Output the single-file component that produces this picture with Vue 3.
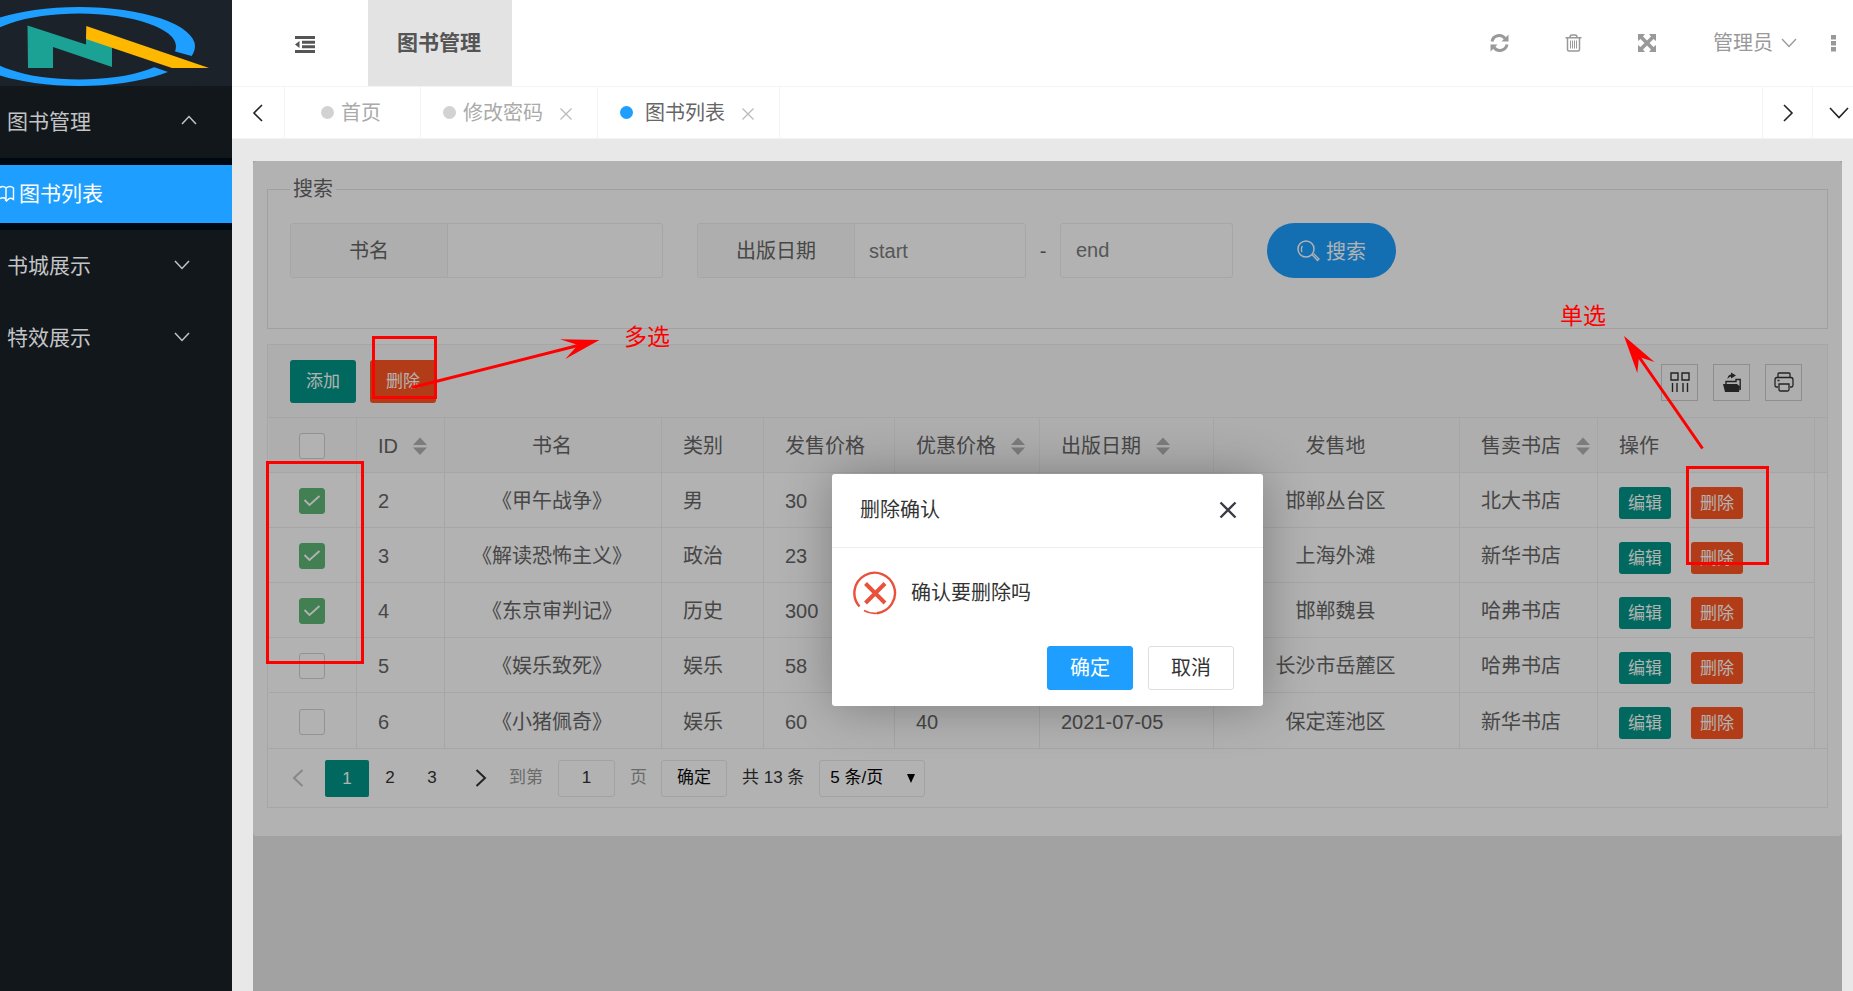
<script setup>
import { ref } from 'vue'

const books = ref([
  { id: 2, name: '《甲午战争》', type: '男', price: '30', sale: '', date: '', place: '邯郸丛台区', shop: '北大书店', checked: true },
  { id: 3, name: '《解读恐怖主义》', type: '政治', price: '23', sale: '', date: '', place: '上海外滩', shop: '新华书店', checked: true },
  { id: 4, name: '《东京审判记》', type: '历史', price: '300', sale: '', date: '', place: '邯郸魏县', shop: '哈弗书店', checked: true },
  { id: 5, name: '《娱乐致死》', type: '娱乐', price: '58', sale: '', date: '', place: '长沙市岳麓区', shop: '哈弗书店', checked: false },
  { id: 6, name: '《小猪佩奇》', type: '娱乐', price: '60', sale: '40', date: '2021-07-05', place: '保定莲池区', shop: '新华书店', checked: false },
])

const columns = [
  { label: 'ID', sort: true },
  { label: '书名', center: true },
  { label: '类别' },
  { label: '发售价格' },
  { label: '优惠价格', sort: true },
  { label: '出版日期', sort: true },
  { label: '发售地', center: true },
  { label: '售卖书店', sort: true },
  { label: '操作' },
]

const allChecked = ref(false)
const bookName = ref('')
const startDate = ref('')
const endDate = ref('')
const jumpTo = ref('1')
</script>

<template>
  <div class="app">
    <aside class="sidebar">
      <div class="logo">
        <svg width="232" height="86" viewBox="0 0 232 86" aria-hidden="true">
          <path fill="#1e9fff" fill-rule="evenodd" d="M79 7a116 39.500 0 1 1 0 79a116 39.500 0 1 1 0-79zM79 13.500a97 33 0 1 0 0 66a97 33 0 1 0 0-66z" />
          <path fill="#1c222a" d="M168 49.500L192.500 56.300L222 64L200 84L167.300 71.800L148 65z" />
          <path fill="#1ba294" d="M27.500 25.500L86 44.500V38L112 47V67L53 47V68H28z" />
          <path fill="#ffb800" d="M86.300 26L209 68H172L86 39z" />
        </svg>
      </div>
      <nav>
        <a href="#" class="menu">
          <span>图书管理</span>
          <svg class="up" width="16" height="10" viewBox="0 0 16 10"><path d="M1 9L8 1.500L15 9" /></svg>
        </a>
        <div class="submenu">
          <a href="#" class="sub">
            <svg width="15" height="18" viewBox="0 0 15 18"><path d="M-1 3Q3 0 6 3V14Q3 11.500-1 14M6 3Q10 0 13.500 3V14.500Q10 12 8 14.500L6.500 16L5 14.500" /></svg>
            <span>图书列表</span>
          </a>
        </div>
        <a v-for="m in ['书城展示', '特效展示']" :key="m" href="#" class="menu">
          <span>{{ m }}</span>
          <svg width="16" height="10" viewBox="0 0 16 10"><path d="M1 1L8 8.500L15 1" /></svg>
        </a>
      </nav>
    </aside>

    <div class="main">
      <header class="header">
        <button class="shrink" aria-label="收起菜单">
          <svg width="20" height="17" viewBox="0 0 20 17"><path fill="#555" d="M0 0h20v3H0zM7 4.700h13v3H7zM7 9.300h13v3H7zM0 14h20v3H0zM0 8.500L4.500 5v7z" /></svg>
        </button>
        <a href="#" class="nav-item">图书管理</a>
        <div class="header-right">
          <button class="tool" aria-label="刷新">
            <svg width="19" height="18" viewBox="0 0 19 18"><path fill="none" stroke="#999" stroke-width="3" d="M2 7.500A7.300 7.300 0 0 1 15 4.500M17 10.500A7.300 7.300 0 0 1 4 13.500" /><path fill="#999" d="M18.500 0.500V7.500H11.500zM0.500 17.500V10.500H7.500z" /></svg>
          </button>
          <button class="tool" aria-label="清除">
            <svg width="17" height="18" viewBox="0 0 17 18" fill="none" stroke="#999"><path stroke-width="1.500" d="M0.500 3.800h16M2.500 4V15.500Q2.500 17 4 17H13Q14.500 17 14.500 15.500V4M5 3.500Q5 1 7 1H10Q12 1 12 3.500" /><path d="M5.500 6.500v8M7.500 6.500v8M9.500 6.500v8M11.500 6.500v8" /></svg>
          </button>
          <button class="tool" aria-label="全屏">
            <svg width="18" height="18" viewBox="0 0 18 18"><path fill="#999" d="M0 0h7L5 2.500L9 6.500L13 2.500L11 0h7v7L15.500 5L11.500 9L15.500 13L18 11v7h-7L13 15.500L9 11.500L5 15.500L7 18H0V11L2.500 13L6.500 9L2.500 5L0 7z" /></svg>
          </button>
          <a href="#" class="user">
            <span>管理员</span>
            <svg width="16" height="10" viewBox="0 0 16 10"><path d="M1 1L8 8.500L15 1" /></svg>
          </a>
          <button class="more" aria-label="更多">
            <svg width="5" height="17" viewBox="0 0 5 17"><path fill="#999" d="M0 0h5v4.500H0zM0 6h5v4.500H0zM0 12h5v4.500H0z" /></svg>
          </button>
        </div>
      </header>

      <div class="tabs">
        <button class="tab-btn first" aria-label="向左">
          <svg width="12" height="18" viewBox="0 0 12 18"><path d="M10 1L2 9L10 17" /></svg>
        </button>
        <a href="#" class="tab home"><i class="dot"></i><span>首页</span></a>
        <a href="#" class="tab"><i class="dot"></i><span>修改密码</span>
          <svg width="12" height="12" viewBox="0 0 12 12"><path d="M0.500 0.500L11.500 11.500M11.500 0.500L0.500 11.500" /></svg>
        </a>
        <a href="#" class="tab active"><i class="dot"></i><span>图书列表</span>
          <svg width="12" height="12" viewBox="0 0 12 12"><path d="M0.500 0.500L11.500 11.500M11.500 0.500L0.500 11.500" /></svg>
        </a>
        <span class="spacer"></span>
        <button class="tab-btn" aria-label="向右">
          <svg width="12" height="18" viewBox="0 0 12 18"><path d="M2 1L10 9L2 17" /></svg>
        </button>
        <button class="tab-btn last" aria-label="标签操作">
          <svg width="20" height="12" viewBox="0 0 20 12"><path d="M1 1L10 10.500L19 1" /></svg>
        </button>
      </div>

      <div class="body">
        <div class="frame">
          <section class="card">
            <fieldset>
              <legend>搜索</legend>
              <form class="search" @submit.prevent>
                <div class="group name-group">
                  <label for="book-name">书名</label>
                  <input id="book-name" v-model="bookName" type="text" />
                </div>
                <div class="group date-group">
                  <label for="date-start">出版日期</label>
                  <input id="date-start" v-model="startDate" type="text" placeholder="start" />
                </div>
                <span class="dash">-</span>
                <input v-model="endDate" class="end" type="text" placeholder="end" aria-label="结束日期" />
                <button class="search-btn" type="submit">
                  <svg width="23" height="22" viewBox="0 0 23 22" fill="none" stroke="#fff"><circle cx="9" cy="9" r="8" stroke-width="1.500" /><path d="M5 12Q3.500 8.500 5.500 6M15 14.500L20.500 20.500L22 19L16.500 13.500" stroke-width="1.300" /></svg>
                  <span>搜索</span>
                </button>
              </form>
            </fieldset>

            <div class="panel">
              <div class="toolbar">
                <button class="btn green">添加</button>
                <button class="btn red">删除</button>
                <div class="tools">
                  <button aria-label="筛选列">
                    <svg width="20" height="20" viewBox="0 0 20 20" fill="none" stroke="#333" stroke-width="1.400"><path d="M1 1h7v7H1zM12 1h7v7H12zM2.500 11v9M7 11v9M13 11v9M17.500 11v9" /></svg>
                  </button>
                  <button aria-label="导出">
                    <svg width="20" height="20" viewBox="0 0 20 20"><path fill="#333" d="M1 12H15L18 14.500L17 20H3zM9 0.500L14 3.500L9 6.500V4.500Q6.500 5 5.500 7Q5.500 3 9 2.500z" /><path fill="none" stroke="#333" stroke-width="1.400" d="M4 12V9.500H14V7.500H18.200V18" /></svg>
                  </button>
                  <button aria-label="打印">
                    <svg width="20" height="20" viewBox="0 0 20 20" fill="none" stroke="#333" stroke-width="1.300"><path d="M4 5.500V2Q4 1 5 1H15Q16 1 16 2V5.500M4 15H2.500Q1 15 1 13V8Q1 5.500 3 5.500H17Q19 5.500 19 8V13Q19 15 17.500 15H16M5 12H15V17.500Q15 19 13.500 19H6.500Q5 19 5 17.500zM3.500 8.500h2" /></svg>
                  </button>
                </div>
              </div>

              <div class="table-wrap">
                <table>
                  <colgroup>
                    <col class="w88" /><col class="w88" /><col class="w217" /><col class="w102" /><col class="w131" />
                    <col class="w145" /><col class="w174" /><col class="w246" /><col class="w138" /><col /><col class="w12" />
                  </colgroup>
                  <thead>
                    <tr>
                      <th class="pick">
                        <label class="check">
                          <input v-model="allChecked" type="checkbox" aria-label="全选" />
                          <svg width="26" height="26" viewBox="0 0 26 26"><path d="M5.500 12L10.500 17L20.500 8" /></svg>
                        </label>
                      </th>
                      <th v-for="c in columns" :key="c.label" :class="{ center: c.center }">
                        <span class="head">
                          <span>{{ c.label }}</span>
                          <svg v-if="c.sort" width="14" height="18" viewBox="0 0 14 18"><path fill="#b2b2b2" d="M7 0.500L14 8H0zM0 10.500H14L7 18z" /></svg>
                        </span>
                      </th>
                      <th class="filler"></th>
                    </tr>
                  </thead>
                  <tbody>
                    <tr v-for="b in books" :key="b.id">
                      <td class="pick">
                        <label class="check">
                          <input v-model="b.checked" type="checkbox" :aria-label="b.name" />
                          <svg width="26" height="26" viewBox="0 0 26 26"><path d="M5.500 12L10.500 17L20.500 8" /></svg>
                        </label>
                      </td>
                      <td>{{ b.id }}</td>
                      <td class="center">{{ b.name }}</td>
                      <td>{{ b.type }}</td>
                      <td>{{ b.price }}</td>
                      <td>{{ b.sale }}</td>
                      <td>{{ b.date }}</td>
                      <td class="center">{{ b.place }}</td>
                      <td>{{ b.shop }}</td>
                      <td>
                        <div class="ops">
                          <button class="btn small green">编辑</button>
                          <button class="btn small red">删除</button>
                        </div>
                      </td>
                      <td class="filler"></td>
                    </tr>
                  </tbody>
                </table>
              </div>

              <div class="pager">
                <button class="prev" aria-label="上一页" disabled>
                  <svg width="12" height="18" viewBox="0 0 12 18"><path d="M10.500 1L2 9L10.500 17" /></svg>
                </button>
                <span class="current">1</span>
                <a href="#" class="page">2</a>
                <a href="#" class="page">3</a>
                <button class="next" aria-label="下一页">
                  <svg width="12" height="18" viewBox="0 0 12 18"><path d="M1.500 1L10 9L1.500 17" /></svg>
                </button>
                <label class="jump">
                  <span>到第</span>
                  <input v-model="jumpTo" type="text" />
                  <span>页</span>
                </label>
                <button class="go">确定</button>
                <span class="total">共 13 条</span>
                <div class="limit">
                  <select aria-label="每页条数">
                    <option>5 条/页</option>
                    <option>10 条/页</option>
                  </select>
                  <svg width="8" height="9" viewBox="0 0 8 9"><path d="M0 0H8L4 9z" /></svg>
                </div>
              </div>
            </div>
          </section>

          <div class="shade">
            <div class="dialog" role="dialog" aria-labelledby="dlg-title">
              <div class="dialog-head">
                <span id="dlg-title">删除确认</span>
                <button aria-label="关闭">
                  <svg width="18" height="18" viewBox="0 0 18 18"><path d="M1.500 1.500L16.500 16.500M16.500 1.500L1.500 16.500" stroke="#3b3a45" stroke-width="2.400" /></svg>
                </button>
              </div>
              <div class="dialog-body">
                <svg width="44" height="44" viewBox="0 0 44 44" fill="none" stroke="#e9513c"><path stroke-width="2.400" d="M6.500 35.500A20.300 20.300 0 1 1 24 42.200" /><path stroke-width="1.600" d="M24 42.200Q17 43 11 39.500" /><path stroke-width="4" d="M12.500 12.500L32 32M32 12.500L12.500 32" /></svg>
                <span>确认要删除吗</span>
              </div>
              <div class="dialog-foot">
                <button class="ok">确定</button>
                <button class="cancel">取消</button>
              </div>
            </div>
          </div>
        </div>
      </div>
    </div>

    <svg class="notes" width="1853" height="991" viewBox="0 0 1853 991">
      <g fill="none" stroke="#f00" stroke-width="3">
        <rect x="373.500" y="337.500" width="62" height="60" />
        <rect x="267.500" y="462.500" width="95" height="200" />
        <rect x="1687.500" y="467.500" width="80" height="96" />
        <path d="M412 387.500L580 345M1702.500 448.500L1637 354" />
      </g>
      <g fill="#f00">
        <path d="M599.500 340L560 339.300L578 345L565.300 359z" />
        <path d="M1624 336L1654.500 362L1639 357L1637.300 373z" />
      </g>
      <text x="624" y="345">多选</text>
      <text x="1560" y="324">单选</text>
    </svg>
  </div>
</template>

<style>
body {
  margin: 0;
}
</style>

<style scoped>
.app,
.app * {
  box-sizing: border-box;
}
.app {
  position: relative;
  display: flex;
  min-height: 100vh;
  overflow: hidden;
  background: #e8e8e8;
  color: #666;
  font: 20px/28px "Liberation Sans", "Noto Sans CJK SC", sans-serif;
}
a {
  color: inherit;
  text-decoration: none;
}
button,
input,
select {
  margin: 0;
  padding: 0;
  border: 0;
  background: none;
  color: inherit;
  font: inherit;
}
svg {
  display: block;
  flex: none;
}

/* sidebar */
.sidebar {
  flex: 0 0 232px;
  background: #12171b;
  color: #c2c4c6;
}
.logo {
  height: 86px;
  background: #1c222a;
}
.menu {
  display: flex;
  align-items: center;
  justify-content: space-between;
  height: 72px;
  padding: 0 42px 0 7px;
  font-size: 21px;
}
.menu svg {
  margin-bottom: 2px;
  fill: none;
  stroke: #c2c4c6;
  stroke-width: 1.500;
}
.menu .up {
  margin-right: -7px;
  margin-bottom: 4px;
}
.submenu {
  padding: 7px 0;
  background: #000812;
}
.sub {
  display: flex;
  align-items: center;
  gap: 4px;
  height: 58px;
  background: #1e9fff;
  color: #fff;
  font-size: 21px;
}
.sub svg {
  fill: none;
  stroke: #fff;
  stroke-width: 1.400;
}

/* header */
.main {
  display: flex;
  flex: 1;
  flex-direction: column;
  min-width: 0;
}
.header {
  display: flex;
  height: 86px;
  background: #fff;
}
.shrink {
  display: flex;
  align-items: center;
  width: 136px;
  padding: 2px 0 0 63px;
}
.nav-item {
  width: 144px;
  padding-right: 2px;
  background: #e3e3e3;
  color: #555;
  font-size: 21px;
  font-weight: bold;
  line-height: 86px;
  text-align: center;
}
.header-right {
  display: flex;
  align-items: center;
  margin-left: auto;
  padding-right: 17px;
  color: #999;
}
.tool {
  display: flex;
  justify-content: center;
  width: 74px;
}
.user {
  display: flex;
  align-items: center;
  gap: 8px;
  margin: 0 34px 0 29px;
}
.user svg {
  fill: none;
  stroke: #999;
  stroke-width: 1.300;
}

/* tabs */
.tabs {
  display: flex;
  height: 53px;
  border-top: 1px solid #f4f4f4;
  border-bottom: 1px solid #f4f4f4;
  background: #fff;
  color: #aaa;
}
.tab-btn {
  display: flex;
  align-items: center;
  justify-content: center;
  width: 50px;
  border-left: 1px solid #f4f4f4;
}
.tab-btn svg {
  fill: none;
  stroke: #222;
  stroke-width: 1.600;
}
.tab-btn.first {
  width: 53px;
  border-left: 0;
  border-right: 1px solid #f4f4f4;
}
.tab-btn.last {
  width: 41px;
  padding-left: 12px;
}
.tab {
  display: flex;
  align-items: center;
  padding: 0 25px 0 22px;
  border-right: 1px solid #f4f4f4;
}
.tab.home {
  padding: 0 39px 0 36px;
}
.dot {
  width: 13px;
  height: 13px;
  margin-right: 7px;
  border-radius: 50%;
  background: #d2d2d2;
}
.tab svg {
  margin: 3px 0 0 17px;
  stroke: #bbb;
  stroke-width: 1.300;
}
.tab.active {
  color: #666;
}
.tab.active .dot {
  margin-right: 12px;
  background: #1e9fff;
}
.spacer {
  flex: 1;
}

/* content */
.body {
  display: flex;
  flex: 1;
  padding: 22px 11px 0 21px;
}
.frame {
  position: relative;
  flex: 1;
  min-width: 0;
}
.card {
  padding: 14px 14px 28px;
  border-radius: 4px;
  background: #fff;
}
fieldset {
  margin: 0 0 15px;
  padding: 20px 22px 50px;
  border: 1px solid #e6e6e6;
}
legend {
  padding: 0 3px;
}
.search {
  display: flex;
  align-items: center;
}
.group {
  display: flex;
  height: 55px;
  border: 1px solid #eee;
  border-radius: 3px;
}
.group label {
  flex: 0 0 157px;
  border-right: 1px solid #eee;
  background: #f9f9f9;
  line-height: 54px;
  text-align: center;
}
.group input {
  flex: 1;
  min-width: 0;
  padding: 0 14px;
}
.name-group {
  width: 373px;
  margin-right: 34px;
}
.date-group {
  width: 329px;
}
.dash {
  width: 34px;
  text-align: center;
}
.end {
  width: 173px;
  height: 55px;
  padding: 0 15px;
  border: 1px solid #eee;
  border-radius: 3px;
}
.search-btn {
  display: flex;
  align-items: center;
  justify-content: center;
  gap: 6px;
  width: 129px;
  height: 55px;
  margin-left: 34px;
  border-radius: 28px;
  background: #1e9fff;
  color: #fff;
}
.search-btn span {
  padding-top: 2px;
}
input::placeholder {
  color: #7c7c7c;
  opacity: 1;
}

.panel {
  border: 1px solid #eee;
}
.toolbar {
  display: flex;
  align-items: center;
  gap: 14px;
  height: 73px;
  padding: 0 25px 0 22px;
  border-bottom: 1px solid #eee;
  background: #f9f9f9;
}
.btn {
  width: 66px;
  height: 43px;
  padding-top: 2px;
  border-radius: 3px;
  color: #fff;
  font-size: 17px;
  line-height: 40px;
}
.green {
  background: #009688;
}
.red {
  background: #ff5722;
}
.tools {
  display: flex;
  gap: 15px;
  margin-left: auto;
  padding-top: 2px;
}
.tools button {
  display: flex;
  align-items: center;
  justify-content: center;
  width: 37px;
  height: 37px;
  border: 1px solid #ccc;
}

.table-wrap {
  padding-left: 1px;
  border-bottom: 1px solid #eee;
}
table {
  width: 100%;
  table-layout: fixed;
  border-collapse: separate;
  border-spacing: 0;
}
.w88 { width: 88px; }
.w217 { width: 217px; }
.w102 { width: 102px; }
.w131 { width: 131px; }
.w145 { width: 145px; }
.w174 { width: 174px; }
.w246 { width: 246px; }
.w138 { width: 138px; }
.w12 { width: 12px; }
th,
td {
  height: 55px;
  padding: 0 0 0 21px;
  border-right: 1px solid #eee;
  border-bottom: 1px solid #eee;
  font-weight: normal;
  text-align: left;
  white-space: nowrap;
}
th {
  background: #f9f9f9;
}
td {
  padding-top: 2px;
}
tbody tr:last-child td {
  border-bottom: 0;
}
.center {
  padding-left: 0;
  padding-right: 2px;
  text-align: center;
}
.pick {
  padding: 0 2px 0 0;
  text-align: center;
}
th.filler,
td.filler {
  padding: 0;
  border-right: 0;
}
td.filler {
  border-bottom: 0;
}
.head {
  display: inline-flex;
  align-items: center;
  gap: 15px;
  vertical-align: middle;
}
.check {
  display: inline-grid;
  vertical-align: middle;
}
.check input,
.check svg {
  grid-area: 1 / 1;
}
.check input {
  width: 26px;
  height: 26px;
  border: 1px solid #d2d2d2;
  border-radius: 3px;
  background: #fff;
  appearance: none;
}
.check svg {
  fill: none;
  pointer-events: none;
}
.check input:checked {
  border-color: #5fb878;
  background: #5fb878;
}
.check input:checked + svg {
  stroke: #fff;
  stroke-width: 1.800;
}
.ops {
  display: flex;
  gap: 20px;
  padding-top: 3px;
}
.btn.small {
  width: 52px;
  height: 32px;
  line-height: 30px;
}

/* pagination */
.pager {
  display: flex;
  align-items: center;
  height: 58px;
  padding-left: 3px;
  color: #333;
  font-size: 17px;
}
.prev,
.next {
  display: flex;
  justify-content: center;
  width: 54px;
}
.next {
  width: 56px;
}
.prev svg,
.next svg {
  fill: none;
  stroke: #333;
  stroke-width: 2;
}
.prev svg {
  stroke: #c2c2c2;
}
.current {
  width: 44px;
  height: 37px;
  border-radius: 2px;
  background: #009688;
  color: #fff;
  line-height: 37px;
  text-align: center;
}
.page {
  width: 42px;
  text-align: center;
}
.jump {
  display: flex;
  align-items: center;
  gap: 15px;
  color: #999;
}
.jump input {
  width: 57px;
  height: 37px;
  border: 1px solid #e8e8e8;
  border-radius: 3px;
  color: #333;
  text-align: center;
}
.go {
  width: 66px;
  height: 37px;
  margin: 0 15px 0 14px;
  border: 1px solid #e8e8e8;
  border-radius: 3px;
  color: #111;
}
.limit {
  display: grid;
  align-items: center;
  margin-left: 15px;
  color: #000;
}
.limit select,
.limit svg {
  grid-area: 1 / 1;
}
.limit select {
  width: 106px;
  height: 37px;
  padding-left: 10px;
  border: 1px solid #e8e8e8;
  border-radius: 3px;
  appearance: none;
}
.limit svg {
  justify-self: end;
  margin-right: 10px;
  pointer-events: none;
}

/* dialog */
.shade {
  position: absolute;
  inset: 0;
  display: flex;
  align-items: center;
  justify-content: center;
  padding-top: 28px;
  background: rgba(0, 0, 0, 0.3);
}
.dialog {
  width: 431px;
  border-radius: 3px;
  background: #fff;
  box-shadow: 1px 1px 50px rgba(0, 0, 0, 0.3);
  color: #333;
}
.dialog-head {
  display: flex;
  align-items: center;
  justify-content: space-between;
  height: 74px;
  padding: 0 26px 2px 28px;
  border-bottom: 1px solid #eee;
}
.dialog-body {
  display: flex;
  align-items: center;
  gap: 14px;
  padding: 23px 21px 31px;
}
.dialog-foot {
  display: flex;
  justify-content: flex-end;
  gap: 15px;
  padding: 0 29px 16px;
}
.dialog-foot button {
  width: 86px;
  height: 44px;
  border: 1px solid #dedede;
  border-radius: 3px;
}
.dialog-foot .ok {
  border-color: #1e9fff;
  background: #1e9fff;
  color: #fff;
}

/* annotation marks over the page */
.notes {
  position: absolute;
  top: 0;
  left: 0;
  pointer-events: none;
}
.notes text {
  fill: #f00;
  font-size: 23px;
}
</style>
